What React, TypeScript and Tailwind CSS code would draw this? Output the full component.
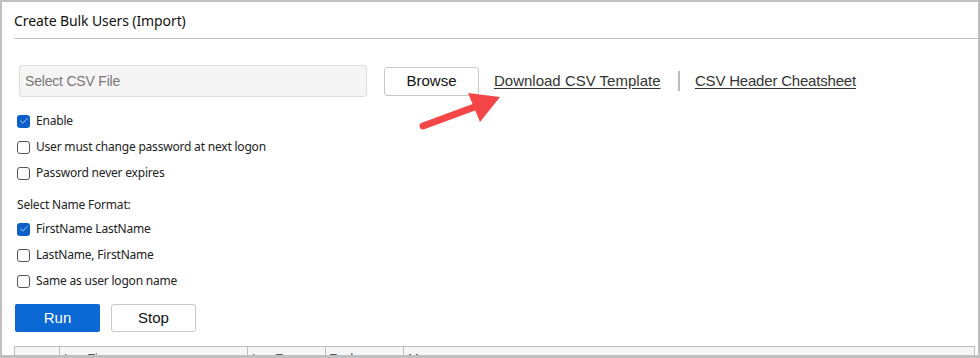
import { Check } from 'lucide-react'

const ui = { fontFamily: '"Noto Sans", "Open Sans", sans-serif' }
const arial = { fontFamily: '"Liberation Sans", Arial, sans-serif' }

function Checkbox({ label, checked }: { label: string; checked?: boolean }) {
  return (
    <label className="flex items-center h-[26px] pl-[3px] text-[12px] tracking-[-0.2px] text-[#222]" style={ui}>
      {checked ? (
        <span className="w-[13px] h-[13px] rounded-[3px] bg-[#0b5fc9] flex items-center justify-center">
          <Check size={10} strokeWidth={2} className="text-[#cfe0f7]" />
        </span>
      ) : (
        <span className="w-[13px] h-[13px] rounded-[3px] border border-[#555] bg-white" />
      )}
      <span className="ml-[6px]">{label}</span>
    </label>
  )
}

export default function App() {
  return (
    <div className="relative w-[980px] h-[358px] overflow-hidden bg-white border-t-2 border-l-2 border-r-2 border-b-[3px] border-[#c0c0c0]">
      <div className="pl-3">
        {/* Header */}
        <div className="h-[37px] flex items-center border-b border-[#c4c4c4] text-[14px] tracking-[-0.1px] text-[#111]" style={ui}>
          Create Bulk Users (Import)
        </div>

        {/* File row */}
        <div className="flex items-center mt-[26px] ml-[5px]" style={arial}>
          <div className="w-[348px] h-[32px] rounded-[3px] border border-[#dcdcdc] bg-[#f5f5f5] flex items-center pl-[5px] text-[14px] tracking-[-0.2px] text-[#777]">
            Select CSV File
          </div>
          <button className="ml-[17px] w-[95px] h-[29px] rounded-[3px] border border-[#c8c8c8] bg-white text-[15px] text-[#111]">
            Browse
          </button>
          <a className="ml-[15px] text-[15px] text-[#333] underline underline-offset-2 decoration-[#333] cursor-pointer">
            Download CSV Template
          </a>
          <span className="ml-[18px] w-[1.5px] h-[20px] bg-[#bbb]" />
          <a className="ml-[15px] text-[15px] tracking-[-0.2px] text-[#333] underline underline-offset-2 decoration-[#333] cursor-pointer">
            CSV Header Cheatsheet
          </a>
        </div>

        {/* Options */}
        <div className="mt-[11px]">
          <Checkbox label="Enable" checked />
          <Checkbox label="User must change password at next logon" />
          <Checkbox label="Password never expires" />
          <div className="h-[30px] flex items-end pb-[2px] pl-[3px] text-[12px] tracking-[-0.2px] text-[#222]" style={ui}>
            Select Name Format:
          </div>
          <Checkbox label="FirstName LastName" checked />
          <Checkbox label="LastName, FirstName" />
          <Checkbox label="Same as user logon name" />
        </div>

        {/* Actions */}
        <div className="flex gap-[11px] mt-[10px] ml-[1px]" style={arial}>
          <button className="w-[85px] h-[28px] rounded-[2px] bg-[#0b68d4] text-white text-[15px]">Run</button>
          <button className="w-[85px] h-[28px] rounded-[3px] border border-[#c8c8c8] bg-white text-[#111] text-[15px]">Stop</button>
        </div>

        {/* Log table header */}
        <div className="mt-[14px] mr-[3px] border-t border-l border-r border-[#bdbdbd] bg-[#f6f6f6] h-[30px] flex text-[12px] text-[#555]" style={ui}>
          <div className="w-[45px] border-r border-[#bdbdbd]" />
          <div className="w-[188px] border-r border-[#bdbdbd] pl-[4px] pt-[3px]">Log Time</div>
          <div className="w-[78px] border-r border-[#bdbdbd] pl-[4px] pt-[3px]">Log Type</div>
          <div className="w-[78px] border-r border-[#bdbdbd] pl-[4px] pt-[3px]">Tool</div>
          <div className="flex-1 pl-[4px] pt-[3px]">Message</div>
        </div>
      </div>

      {/* Red pointer arrow */}
      <svg className="absolute left-0 top-0 pointer-events-none" width="980" height="358">
        <line x1="421" y1="124" x2="478" y2="103" stroke="#f44646" strokeWidth="7" strokeLinecap="round" />
        <polygon points="498,95 466,91 478,120" fill="#f44646" />
      </svg>
    </div>
  )
}
